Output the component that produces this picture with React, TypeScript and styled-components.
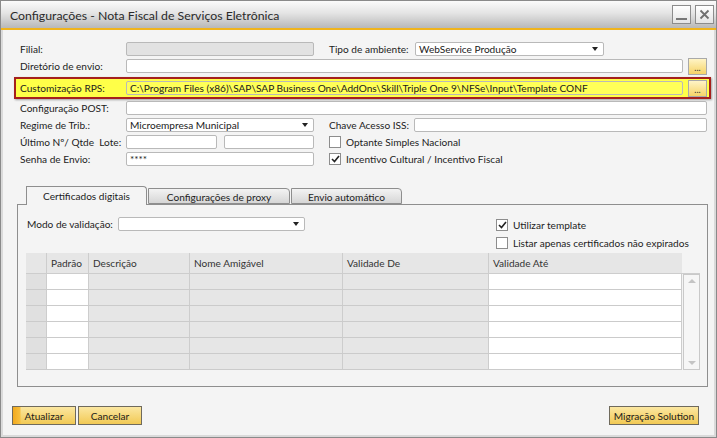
import React from "react";
import styled, { createGlobalStyle, css } from "styled-components";

const GlobalStyle = createGlobalStyle`
  html, body { margin: 0; padding: 0; background: #ffffff; }
  body { font-family: Lato, "Liberation Sans", Arial, sans-serif; font-size: 10.1px; color: #1c1c1c; }
  * { box-sizing: border-box; }
`;

const Window = styled.div`
  width: 717px;
  height: 438px;
  border: 1px solid #8a8a8a;
  background: #dadada;
  padding: 0 2px 2px 2px;
  display: flex;
  flex-direction: column;
`;

const TitleBar = styled.div`
  height: 29px;
  display: flex;
  align-items: center;
  justify-content: space-between;
  padding: 0 2px 0 9px;
  margin: 0 -2px;
  background: linear-gradient(#fbfbfb 0%, #e4e4e4 45%, #b8b8b8 100%);
  border-bottom: 2px solid #f0b41c;
`;

const Title = styled.div`
  font-size: 12.3px;
  color: #2a2a2a;
  padding-top: 2px;
`;

const TitleButtons = styled.div`
  display: flex;
  gap: 4px;
  padding-bottom: 1px;
`;

const TitleBtn = styled.div`
  width: 19px;
  height: 19px;
  border: 1px solid #8c8c8c;
  background: linear-gradient(#ffffff, #e4e4e4);
  display: flex;
  align-items: center;
  justify-content: center;
  color: #6a6a6a;
`;

const Body = styled.div`
  flex: 1;
  background: #f4f4f4;
  padding: 10px 3px 0 10px;
  display: flex;
  flex-direction: column;
`;

const Form = styled.div`
  margin-left: 1px;
  display: flex;
  flex-direction: column;
`;

const Row = styled.div<{ $h?: number; $mt?: number }>`
  height: ${(p) => p.$h ?? 17}px;
  margin-top: ${(p) => p.$mt ?? 0}px;
  display: flex;
  align-items: center;
  padding: 0 4px 0 6px;
`;

const HighlightRow = styled(Row)`
  border: 2px solid #a5201c;
  background: #ffff48;
  padding: 0 2px 0 4px;
  box-shadow: 1px 1px 2px rgba(0, 0, 0, 0.35);
`;

const Label = styled.span<{ $w?: number }>`
  width: ${(p) => (p.$w ? `${p.$w}px` : "auto")};
  flex: none;
  white-space: nowrap;
  color: #1c1c1c;
`;

const Field = styled.div<{ $w?: number; $disabled?: boolean; $yellow?: boolean }>`
  ${(p) => (p.$w ? css`width: ${p.$w}px; flex: none;` : css`flex: 1;`)}
  height: 14px;
  border: 1px solid #b9b9b9;
  border-radius: 2px;
  background: ${(p) => (p.$disabled ? "#e2e2e2" : p.$yellow ? "#ffff58" : "#ffffff")};
  padding: 0 3px;
  display: flex;
  align-items: center;
  white-space: nowrap;
  overflow: hidden;
  color: #1a1a1a;
  line-height: 12px;
`;

const Arrow = styled.span`
  margin-left: auto;
  width: 0;
  height: 0;
  border-left: 3.5px solid transparent;
  border-right: 3.5px solid transparent;
  border-top: 4px solid #222;
  margin-right: 2px;
`;

const Gap = styled.span<{ $w: number }>`
  width: ${(p) => p.$w}px;
  flex: none;
`;

const DotsButton = styled.div`
  width: 19px;
  height: 17px;
  flex: none;
  margin-left: 5px;
  border: 1px solid #a9a9a9;
  background: linear-gradient(#fff4c6, #f6d467);
  display: flex;
  align-items: flex-end;
  justify-content: center;
  font-size: 9px;
  line-height: 12px;
  color: #333;
`;

const CheckRow = styled.span`
  display: flex;
  align-items: center;
  gap: 5px;
  white-space: nowrap;
`;

const Box = styled.span`
  width: 12px;
  height: 12px;
  border: 1px solid #8d8d8d;
  background: #fff;
  display: flex;
  align-items: center;
  justify-content: center;
  flex: none;
`;

const Check = ({ checked }: { checked?: boolean }) => (
  <Box>
    {checked && (
      <svg width="9" height="8" viewBox="0 0 9 8">
        <path d="M1 4 L3.5 6.5 L8 1" fill="none" stroke="#222" strokeWidth="1.6" />
      </svg>
    )}
  </Box>
);

const TabStrip = styled.div`
  margin: 19px 3px 0 4px;
  height: 18px;
  display: flex;
  align-items: flex-end;
  padding-left: 9px;
  position: relative;
  z-index: 1;
`;

const Tab = styled.div<{ $w: number; $active?: boolean }>`
  width: ${(p) => p.$w}px;
  height: ${(p) => (p.$active ? 19 : 16)}px;
  margin-bottom: ${(p) => (p.$active ? -1 : 0)}px;
  margin-right: 1px;
  border: 1px solid #8e8e8e;
  border-bottom: ${(p) => (p.$active ? "none" : "1px solid #8e8e8e")};
  border-radius: 0 4px 0 0;
  background: ${(p) => (p.$active ? "#f4f4f4" : "linear-gradient(#f3f3f3, #d6d6d6)")};
  display: flex;
  align-items: center;
  justify-content: center;
  color: #1c1c1c;
  white-space: nowrap;
  padding-top: ${(p) => (p.$active ? 0 : 1)}px;
`;

const Panel = styled.div`
  margin: 0 3px 0 4px;
  height: 183px;
  border: 1px solid #8e8e8e;
  padding: 13px 8px 0 8px;
  display: flex;
  flex-direction: column;
`;

const PanelTop = styled.div`
  display: grid;
  grid-template-columns: 470px 1fr;
  height: 35px;
`;

const ModoRow = styled.div`
  display: flex;
  align-items: center;
  height: 14px;
  margin-top: -1px;
  padding-left: 1px;
`;

const CheckCol = styled.div`
  display: flex;
  flex-direction: column;
  gap: 4px;
  & > span { height: 14px; }
`;

const GridWrap = styled.div`
  display: flex;
  flex-direction: column;
  width: 674px;
`;

const cols = [21, 42, 101, 153, 146, 193];

const GridHeader = styled.div`
  display: flex;
  height: 20px;
  width: 656px;
  background: #e6e6e6;
`;

const HeadCell = styled.div<{ $w: number }>`
  width: ${(p) => p.$w}px;
  flex: none;
  border-right: 1px solid #cdcdcd;
  padding-left: 4px;
  display: flex;
  align-items: center;
  color: #333;
  &:last-child { border-right: none; }
`;

const GridBody = styled.div`
  display: flex;
  border-top: 1px solid #cdcdcd;
`;

const Rows = styled.div`
  width: 656px;
  display: flex;
  flex-direction: column;
`;

const GRow = styled.div`
  display: flex;
  height: 16px;
  border-bottom: 1px solid #cbcbcb;
`;

const Cell = styled.div<{ $w: number; $bg: string }>`
  width: ${(p) => p.$w}px;
  flex: none;
  background: ${(p) => p.$bg};
  border-right: 1px solid #cdcdcd;
`;

const Scroll = styled.div`
  width: 17px;
  margin-left: 1px;
  border: 1px solid #c9c9c9;
  background: #f6f6f6;
  display: flex;
  flex-direction: column;
  justify-content: space-between;
  align-items: center;
  padding: 4px 0;
`;

const ScrollArrow = styled.span<{ $up?: boolean }>`
  width: 0;
  height: 0;
  border-left: 4px solid transparent;
  border-right: 4px solid transparent;
  ${(p) =>
    p.$up
      ? css`border-bottom: 4px solid #c4c4c4;`
      : css`border-top: 4px solid #c4c4c4;`}
`;

const Footer = styled.div`
  margin-top: 19px;
  display: flex;
  align-items: center;
  padding-right: 10px;
  margin-left: -1px;
`;

const Button = styled.div<{ $w: number; $default?: boolean }>`
  width: ${(p) => p.$w}px;
  height: 19px;
  margin-right: 2px;
  border: 1px solid #6f6a5c;
  background: ${(p) =>
    p.$default
      ? "linear-gradient(90deg, #f2a91d 0px, #f7bf3e 7px, transparent 8px), linear-gradient(#fbe7a1, #f2c954)"
      : "linear-gradient(#fbe7a1, #f2c954)"};
  display: flex;
  align-items: center;
  justify-content: center;
  color: #1c1c1c;
  white-space: nowrap;
`;

const Push = styled.span`
  flex: 1;
`;

const gridCellBg = ["#e0e0e0", "#ffffff", "#e6e6e6", "#e6e6e6", "#e6e6e6", "#ffffff"];

export default function App() {
  return (
    <>
      <GlobalStyle />
      <Window>
        <TitleBar>
          <Title>Configurações - Nota Fiscal de Serviços Eletrônica</Title>
          <TitleButtons>
            <TitleBtn>
              <svg width="13" height="13" viewBox="0 0 13 13">
                <rect x="1" y="10" width="11" height="2" fill="#777" />
              </svg>
            </TitleBtn>
            <TitleBtn>
              <svg width="13" height="13" viewBox="0 0 13 13">
                <path d="M2.5 2.5 L10.5 10.5 M10.5 2.5 L2.5 10.5" stroke="#707070" strokeWidth="1.8" />
              </svg>
            </TitleBtn>
          </TitleButtons>
        </TitleBar>
        <Body>
          <Form>
            <Row>
              <Label $w={106}>Filial:</Label>
              <Field $w={188} $disabled />
              <Gap $w={15} />
              <Label $w={86}>Tipo de ambiente:</Label>
              <Field $w={189}>
                WebService Produção
                <Arrow />
              </Field>
            </Row>
            <Row $h={18}>
              <Label $w={106}>Diretório de envio:</Label>
              <Field />
              <DotsButton>...</DotsButton>
            </Row>
            <HighlightRow $h={22} $mt={2}>
              <Label $w={106}>Customização RPS:</Label>
              <Field $yellow>
                C:\Program Files (x86)\SAP\SAP Business One\AddOns\Skill\Triple One 9\NFSe\Input\Template CONF
              </Field>
              <DotsButton>...</DotsButton>
            </HighlightRow>
            <Row>
              <Label $w={106}>Configuração POST:</Label>
              <Field />
            </Row>
            <Row>
              <Label $w={106}>Regime de Trib.:</Label>
              <Field $w={188}>
                Microempresa Municipal
                <Arrow />
              </Field>
              <Gap $w={15} />
              <Label $w={85}>Chave Acesso ISS:</Label>
              <Field />
            </Row>
            <Row>
              <Label $w={106}>Último Nº/ Qtde&nbsp; Lote:</Label>
              <Field $w={91} />
              <Gap $w={7} />
              <Field $w={90} />
              <Gap $w={15} />
              <CheckRow>
                <Check />
                Optante Simples Nacional
              </CheckRow>
            </Row>
            <Row>
              <Label $w={106}>Senha de Envio:</Label>
              <Field $w={188}>****</Field>
              <Gap $w={15} />
              <CheckRow>
                <Check checked />
                Incentivo Cultural / Incentivo Fiscal
              </CheckRow>
            </Row>
          </Form>

          <TabStrip>
            <Tab $w={121} $active>Certificados digitais</Tab>
            <Tab $w={142}>Configurações de proxy</Tab>
            <Tab $w={111}>Envio automático</Tab>
          </TabStrip>
          <Panel>
            <PanelTop>
              <ModoRow>
                <Label $w={91}>Modo de validação:</Label>
                <Field $w={187}>
                  <Arrow />
                </Field>
              </ModoRow>
              <CheckCol>
                <CheckRow>
                  <Check checked />
                  Utilizar template
                </CheckRow>
                <CheckRow>
                  <Check />
                  Listar apenas certificados não expirados
                </CheckRow>
              </CheckCol>
            </PanelTop>
            <GridWrap>
              <GridHeader>
                {["", "Padrão", "Descrição", "Nome Amigável", "Validade De", "Validade Até"].map((h, i) => (
                  <HeadCell key={i} $w={cols[i]}>
                    {h}
                  </HeadCell>
                ))}
              </GridHeader>
              <GridBody>
                <Rows>
                  {Array.from({ length: 6 }).map((_, r) => (
                    <GRow key={r}>
                      {cols.map((w, i) => (
                        <Cell key={i} $w={w} $bg={gridCellBg[i]} />
                      ))}
                    </GRow>
                  ))}
                </Rows>
                <Scroll>
                  <ScrollArrow $up />
                  <ScrollArrow />
                </Scroll>
              </GridBody>
            </GridWrap>
          </Panel>
          <Footer>
            <Button $w={64} $default>Atualizar</Button>
            <Button $w={64}>Cancelar</Button>
            <Push />
            <Button $w={90}>Migração Solution</Button>
          </Footer>
        </Body>
      </Window>
    </>
  );
}
